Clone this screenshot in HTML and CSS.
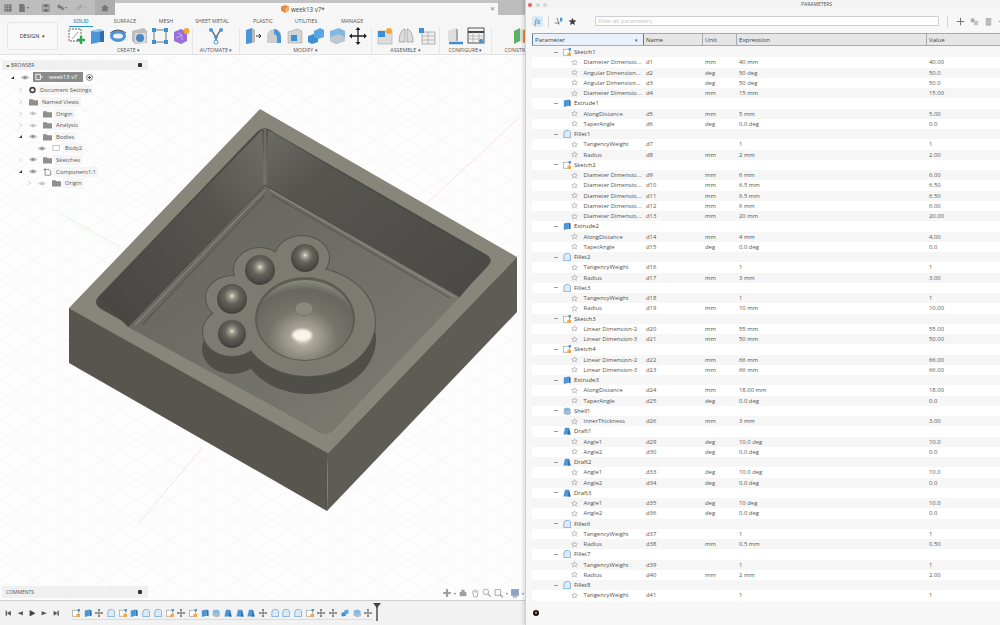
FILE: index.html
```html
<!DOCTYPE html>
<html lang="en">
<head>
    <meta charset="UTF-8">
    <meta name="viewport" content="width=device-width, initial-scale=1.0">
    <title>week13 v7 - Parameters</title>
    <link rel="stylesheet" href="styles.css">
</head>
<body>
    <svg class="defs" width="0" height="0">
        <defs>
            <symbol id="i-sketch" viewBox="0 0 18 18"><rect x="2" y="2" width="12" height="12" fill="#fff" stroke="#666" stroke-dasharray="2 1"/><path d="M5 12 L11 5" stroke="#999"/><path d="M14 9v8M10 13h8" stroke="#2fa84a" stroke-width="2.4"/></symbol>
            <symbol id="i-extrude" viewBox="0 0 18 18"><path d="M3 4l9-2v13l-9 2z" fill="#4a96d8"/><path d="M12 2l4 2v11l-4 0z" fill="#2f6fab"/><path d="M3 4l9-2 4 2-9 1z" fill="#9ccaf0"/></symbol>
            <symbol id="i-revolve" viewBox="0 0 18 18"><ellipse cx="9" cy="9" rx="8" ry="6" fill="#4a96d8"/><ellipse cx="9" cy="9" rx="5" ry="2.6" fill="#eee"/><path d="M1 6 Q9 0 17 6" stroke="#555" fill="none"/></symbol>
            <symbol id="i-hole" viewBox="0 0 18 18"><path d="M2 4l12-3 3 3v12l-12 1-3-3z" fill="#bdbdbd"/><path d="M5 6h11v10H5z" fill="#d9d9d9"/><circle cx="10" cy="11" r="4" fill="#4a88c0"/></symbol>
            <symbol id="i-pattern" viewBox="0 0 18 18"><path d="M3 3h12M3 3v12M15 3v12M3 15h12" stroke="#777"/><rect x="1" y="1" width="4" height="4" fill="#3d8fd4"/><rect x="13" y="1" width="4" height="4" fill="#3d8fd4"/><rect x="1" y="13" width="4" height="4" fill="#3d8fd4"/><rect x="13" y="13" width="4" height="4" fill="#3d8fd4"/></symbol>
            <symbol id="i-form" viewBox="0 0 18 18"><path d="M2 5l7-3 6 3v9l-6 3-7-3z" fill="#9a6fd8"/><path d="M6 6l4 2v5M4 11l6-3" stroke="#c9aef0" fill="none"/><circle cx="14.5" cy="4" r="3" fill="#f2a92e"/></symbol>
            <symbol id="i-auto" viewBox="0 0 18 18"><path d="M5 4l4 6 4-6M9 10v4" stroke="#555" stroke-width="1.3" fill="none"/><circle cx="4" cy="3" r="2" fill="#4a96d8"/><circle cx="14" cy="3" r="2" fill="#4a96d8"/><circle cx="9" cy="10" r="2" fill="#4a96d8"/><circle cx="9" cy="15" r="2" fill="#fff" stroke="#4a96d8"/></symbol>
            <symbol id="i-press" viewBox="0 0 18 18"><path d="M2 3l6-2v15l-6 1z" fill="#4a96d8"/><path d="M8 1l3 2v12l-3 1z" fill="#bbb"/><path d="M12 9h5M15 7l2 2-2 2" stroke="#333" fill="none"/></symbol>
            <symbol id="i-fillet" viewBox="0 0 18 18"><path d="M2 16V8a7 7 0 0 1 7-6h3l4 4v10z" fill="#cfcfcf"/><path d="M9 2a8 8 0 0 1 7 8v6h-4v-5a4 4 0 0 0-3-4z" fill="#4a96d8"/></symbol>
            <symbol id="i-chamfer" viewBox="0 0 18 18"><path d="M2 5l9-3 5 2v12H2z" fill="#d4d4d4" stroke="#999" stroke-width=".5"/><path d="M5 8l6 0v6H5z" fill="#3d8fd4"/></symbol>
            <symbol id="i-combine" viewBox="0 0 18 18"><path d="M1 9l6-2 4 1v7l-6 2-4-2z" fill="#3d8fd4"/><path d="M7 4l6-3 4 2v7l-6 2-4-2z" fill="#5aa5e6"/></symbol>
            <symbol id="i-shell" viewBox="0 0 18 18"><path d="M2 4l9-3 6 3v10l-9 3-6-3z" fill="#7fb7e6"/><path d="M2 10l9-3 6 3v4l-9 3-6-3z" fill="#bfc7cf"/></symbol>
            <symbol id="i-move" viewBox="0 0 18 18"><path d="M9 1v16M1 9h16" stroke="#222" stroke-width="1.3"/><path d="M9 0l2.5 3h-5zM9 18l2.5-3h-5zM0 9l3-2.5v5zM18 9l-3-2.5v5z" fill="#222"/></symbol>
            <symbol id="i-joint" viewBox="0 0 18 18"><rect x="2" y="4" width="14" height="13" fill="#ddd" stroke="#999" stroke-width=".5"/><rect x="2" y="4" width="7" height="6" fill="#3d8fd4"/><circle cx="13" cy="4" r="3" fill="#f2a92e"/></symbol>
            <symbol id="i-contact" viewBox="0 0 18 18"><path d="M2 15C2 7 5 2 8 2v13zM10 15V2c3 0 6 5 6 13z" fill="#dcdcdc" stroke="#888" stroke-width=".6"/></symbol>
            <symbol id="i-table" viewBox="0 0 18 18"><rect x="4" y="5" width="13" height="12" fill="#eee" stroke="#888" stroke-width=".6"/><path d="M4 9h13M4 13h13M10 5v12" stroke="#999" stroke-width=".6"/><rect x="1" y="1" width="5" height="5" fill="#3d8fd4"/></symbol>
            <symbol id="i-config" viewBox="0 0 18 18"><path d="M2 4l8-3v13H2z" fill="#dedede"/><path d="M10 1l2 2v11h-2z" fill="#aaa"/><path d="M3 16h14" stroke="#3d8fd4" stroke-width="2.5"/></symbol>
            <symbol id="i-sheet" viewBox="0 0 18 18"><rect x="1" y="1" width="16" height="15" fill="#f2f2f2" stroke="#555"/><path d="M1 5h16" stroke="#444" stroke-width="2"/><path d="M1 9h16M1 12h16M6 5v11M12 5v11" stroke="#999" stroke-width=".6"/><circle cx="14" cy="14" r="2" fill="#3d8fd4"/></symbol>
            <symbol id="i-plane" viewBox="0 0 18 18"><path d="M1 4l6-3v13l-6 3z" fill="#5cb06a"/><path d="M7 1l3 2v13l-3-2z" fill="#ddd"/><path d="M10 3l7-2v13l-7 2z" fill="#e8893a"/></symbol>
            <symbol id="i-eye" viewBox="0 0 12 8"><path d="M1 4q5-5 10 0q-5 5-10 0z" fill="#bcbcbc"/><circle cx="6" cy="4" r="1.6" fill="#8d8d8d"/></symbol>
            <symbol id="i-folder" viewBox="0 0 10 8"><path d="M0 1h4l1 1h5v6H0z" fill="#8f8f8f"/></symbol>
            <symbol id="i-star" viewBox="0 0 10 10"><path d="M5 1l1.2 2.7 2.9.3-2.200 1.900.7 2.900L5 6.700 2.400 8.800l.7-2.900L.9 4l2.900-.3z" fill="none" stroke="#8a8a8a" stroke-width=".7"/></symbol>
            <symbol id="p-sketch" viewBox="0 0 10 10"><rect x=".5" y="1.5" width="7.5" height="7.5" fill="#fff" stroke="#8c8c8c" stroke-width=".7"/><rect x="5.5" y="6" width="4.500" height="4" fill="#eda94a"/><rect x="7" y="0" width="3" height="3" fill="#4a96d8"/></symbol>
            <symbol id="p-extrude" viewBox="0 0 10 10"><path d="M1 2l6-1.500v8L1 10z" fill="#4a96d8"/><path d="M7 .5l2.500 1.500v7L7 8.500z" fill="#2f6fab"/></symbol>
            <symbol id="p-fillet" viewBox="0 0 10 10"><path d="M1 9.500V4a4 4 0 0 1 4-3.500h2l2.500 2v7z" fill="#dfeaf4" stroke="#4a96d8" stroke-width=".8"/></symbol>
            <symbol id="p-shell" viewBox="0 0 10 10"><path d="M1 2l5-1.500 3.500 2v6L5 10 1 8z" fill="#7fb7e6"/><path d="M1 6l5-1.500 3.500 2v2.500L5 10 1 8z" fill="#aebcc8"/></symbol>
            <symbol id="p-draft" viewBox="0 0 10 10"><path d="M2.500 1h5l2 8.500H.5z" fill="#4a96d8"/><path d="M7.500 1l2 8.500H6z" fill="#2f6fab"/></symbol>
        </defs>
    </svg>

    <div class="app">
        <div class="titlebar">
            <div class="file-tools">
                <svg class="tool" viewBox="0 0 10 10"><path d="M1 1h8v8H1zM1 4h8M1 7h8M4 1v8M7 1v8" fill="none" stroke="#666"/></svg>
                <svg class="tool wide" viewBox="0 0 14 10"><path d="M1 0h5l2 2v8H1z" fill="#777"/><path d="M10 4h4l-2 2z" fill="#666"/></svg>
                <svg class="tool tool-save" viewBox="0 0 10 10"><path d="M1 1h8v8H1z" fill="none" stroke="#666"/><path d="M3 1h4v3H3zM3 6h4v3H3z" fill="#666"/></svg>
                <svg class="tool wide" viewBox="0 0 14 10"><path d="M6 3H3.500M1 3l3-2.500v5zM3 3h3a3 3 0 0 1 2 5" fill="#777" stroke="#777" stroke-width=".8"/><path d="M10 4h4l-2 2z" fill="#777"/></svg>
                <svg class="tool wide faint" viewBox="0 0 14 10"><path d="M8 3H5a3 3 0 0 0-2 5M9 3L6 .5v5z" fill="#999" stroke="#999" stroke-width=".8"/><path d="M10 4h4l-2 2z" fill="#999"/></svg>
                <div class="home"><svg class="tool" viewBox="0 0 10 10"><path d="M5 1L0 5h1.500v4h7V5H10z" fill="#777"/></svg></div>
            </div>
            <div class="doc-tab">
                <svg class="doc-icon" viewBox="0 0 10 10"><path d="M0 2l5-2 5 2v5l-5 3-5-3z" fill="#e9883a"/><path d="M5 4l5-2v5l-5 3z" fill="#f2b06a"/></svg>
                <span>week13 v7*</span>
                <span class="doc-close">&#x2715;</span>
            </div>
            <div class="title-end"></div>
        </div>

        <div class="ribbon">
            <div class="design-btn">DESIGN <b>&#9662;</b></div>
            <div class="tabs">
                <span class="tab tab-solid"><em>SOLID</em></span>
                <span class="tab tab-surface">SURFACE</span>
                <span class="tab tab-mesh">MESH</span>
                <span class="tab tab-sheet">SHEET METAL</span>
                <span class="tab tab-plastic">PLASTIC</span>
                <span class="tab tab-utilities">UTILITIES</span>
                <span class="tab tab-manage">MANAGE</span>
            </div>
            <div class="groups">
                <div class="group group-create">
                    <div class="icons">
                        <svg><use href="#i-sketch"/></svg><svg><use href="#i-extrude"/></svg><svg><use href="#i-revolve"/></svg><svg><use href="#i-hole"/></svg><svg><use href="#i-pattern"/></svg><svg><use href="#i-form"/></svg>
                    </div>
                    <div class="group-label">CREATE <b>&#9662;</b></div>
                </div>
                <div class="group group-automate">
                    <div class="icons"><svg><use href="#i-auto"/></svg></div>
                    <div class="group-label">AUTOMATE <b>&#9662;</b></div>
                </div>
                <div class="group group-modify">
                    <div class="icons">
                        <svg><use href="#i-press"/></svg><svg><use href="#i-fillet"/></svg><svg><use href="#i-chamfer"/></svg><svg><use href="#i-combine"/></svg><svg><use href="#i-shell"/></svg><svg><use href="#i-move"/></svg>
                    </div>
                    <div class="group-label">MODIFY <b>&#9662;</b></div>
                </div>
                <div class="group group-assemble">
                    <div class="icons">
                        <svg><use href="#i-joint"/></svg><svg><use href="#i-contact"/></svg><svg><use href="#i-table"/></svg>
                    </div>
                    <div class="group-label">ASSEMBLE <b>&#9662;</b></div>
                </div>
                <div class="group group-configure">
                    <div class="icons">
                        <svg><use href="#i-config"/></svg><svg><use href="#i-sheet"/></svg>
                    </div>
                    <div class="group-label">CONFIGURE <b>&#9662;</b></div>
                </div>
                <div class="group group-construct">
                    <div class="icons"><svg><use href="#i-plane"/></svg></div>
                    <div class="group-label">CONSTRUCT <b>&#9662;</b></div>
                </div>
            </div>
        </div>

        <div class="canvas">
            <svg class="model" viewBox="0 55 525 545">
                <defs>
                    <pattern id="gridA" width="34" height="20" patternUnits="userSpaceOnUse">
                        <path d="M0 0L34 20M0 20L34 0" stroke="#f1f1f1" stroke-width=".6"/>
                    </pattern>
                    <linearGradient id="wallLeft" x1="0" y1="1" x2="1" y2="0">
                        <stop offset="0" stop-color="#464541"/>
                        <stop offset=".65" stop-color="#55544f"/>
                        <stop offset="1" stop-color="#6f6e67"/>
                    </linearGradient>
                    <linearGradient id="wallRight" x1="1" y1="1" x2="0" y2="0">
                        <stop offset="0" stop-color="#494844"/>
                        <stop offset=".75" stop-color="#565550"/>
                        <stop offset="1" stop-color="#6d6c65"/>
                    </linearGradient>
                    <linearGradient id="floor" x1="0" y1="0" x2="1" y2="1">
                        <stop offset="0" stop-color="#63625c"/>
                        <stop offset=".6" stop-color="#72716a"/>
                        <stop offset="1" stop-color="#838176"/>
                    </linearGradient>
                    <radialGradient id="ball" cx=".5" cy=".4" r=".6">
                        <stop offset="0" stop-color="#ebe8dc"/>
                        <stop offset=".14" stop-color="#a5a194"/>
                        <stop offset=".42" stop-color="#67655d"/>
                        <stop offset=".8" stop-color="#4c4b46"/>
                        <stop offset="1" stop-color="#3f3e3a"/>
                    </radialGradient>
                    <radialGradient id="dome" cx=".48" cy=".72" r=".75">
                        <stop offset="0" stop-color="#f4f1e6"/>
                        <stop offset=".14" stop-color="#aca89b"/>
                        <stop offset=".48" stop-color="#75736a"/>
                        <stop offset=".8" stop-color="#68675f"/>
                        <stop offset="1" stop-color="#94948a"/>
                    </radialGradient>
                    <filter id="soft"><feGaussianBlur stdDeviation="1.2"/></filter>
                </defs>
                <rect x="0" y="55" width="525" height="545" fill="#fdfdfd"/>
                <rect x="0" y="55" width="525" height="545" fill="url(#gridA)"/>
                <path d="M520 117L400 228M203 447L137 525" stroke="#f6dcdc" stroke-width=".8"/>
                <path d="M60 213L120 247" stroke="#dcf0dc" stroke-width=".8"/>

                <polygon points="69,308 328,453 327,511 69,363" fill="#57554e"/>
                <polygon points="328,453 517,257 517,312 327,511" fill="#5e5c55"/>
                <polygon points="260,109 517,257 328,453 69,308" fill="#88857b"/>
                <path d="M69 308L328 453L517 257" stroke="#6f6d64" stroke-width=".6" fill="none"/>

                <path d="M258 131Q265 125 273 132L487 255Q494 260 488 266L334 429Q328 436 320 432L101 309Q92 303 99 296Z" fill="#4b4a45"/>
                <polygon points="262,130 99,298 128,327 265,185" fill="url(#wallLeft)"/>
                <polygon points="268,130 490,260 460,297 265,185" fill="url(#wallRight)"/>
                <path d="M265 129V185" stroke="#7d7b73" stroke-width="3" opacity=".7"/>
                <path d="M265 185L128 327L322 433Q328 436 333 430L460 297Z" fill="url(#floor)"/>
                <path d="M265 190L135 325M270 190L455 297" stroke="#93918a" stroke-width="1" fill="none"/>
                <path d="M265 195L142 325M272 195L450 298" stroke="#55544e" stroke-width="1.2" fill="none" opacity=".8"/>
                <path d="M265 185L128 327M265 185L460 297" stroke="#4e4d47" stroke-width="1" fill="none"/>

                <g fill="#4f4e48">
                    <ellipse cx="308" cy="339" rx="68" ry="55"/>
                    <ellipse cx="232" cy="349" rx="30" ry="25"/>
                </g>
                <g class="paw-edge" fill="#55544e" stroke="#55544e" stroke-width="2">
                    <ellipse cx="308" cy="322" rx="67" ry="54"/>
                    <ellipse cx="232" cy="332" rx="29" ry="24"/>
                    <ellipse cx="302" cy="258" rx="27" ry="22"/>
                    <ellipse cx="260" cy="270" rx="26" ry="22"/>
                    <ellipse cx="232" cy="298" rx="26" ry="22"/>
                </g>
                <g fill="#7d7b71">
                    <ellipse cx="308" cy="322" rx="67" ry="54"/>
                    <ellipse cx="232" cy="332" rx="29" ry="24"/>
                    <ellipse cx="302" cy="258" rx="27" ry="22"/>
                    <ellipse cx="260" cy="270" rx="26" ry="22"/>
                    <ellipse cx="232" cy="298" rx="26" ry="22"/>
                    <polygon points="232,298 262,272 302,260 320,282 290,320 240,340"/>
                </g>
                <ellipse cx="305" cy="319" rx="50" ry="42" fill="#5d5c54"/>
                <ellipse cx="305" cy="320" rx="48" ry="40" fill="url(#dome)"/>
                <ellipse cx="302" cy="335" rx="10" ry="6" fill="#f7f4e9" filter="url(#soft)"/>
                <ellipse cx="304" cy="309" rx="9" ry="7" fill="#8a887e" stroke="#6d6b63" stroke-width=".6"/>
                <circle cx="305" cy="258" r="14" fill="url(#ball)"/>
                <circle cx="260" cy="270" r="15" fill="url(#ball)"/>
                <circle cx="232" cy="299" r="15" fill="url(#ball)"/>
                <circle cx="232" cy="334" r="14" fill="url(#ball)"/>
            </svg>

            <div class="browser">
                <div class="panel-head"><span class="collapse">&#9666;&#9666;</span><span class="panel-title">BROWSER</span><span class="pin"></span></div>
                <div class="tree">
                    <div class="tree-row d0"><i class="arrow open"></i><svg class="eye"><use href="#i-eye"/></svg><span class="root-icon"><svg viewBox="0 0 10 8"><path d="M1 1h5v6H1zM6 4h3" stroke="#fff" fill="none"/></svg></span><span class="label root-label">week13 v7</span><i class="radio"></i></div>
                    <div class="tree-row d1"><i class="arrow"></i><svg class="icon gear" viewBox="0 0 10 10"><circle cx="5" cy="5" r="3" fill="none" stroke="#444" stroke-width="2"/></svg><span class="label label-doc">Document Settings</span></div>
                    <div class="tree-row d1"><i class="arrow"></i><svg class="icon"><use href="#i-folder"/></svg><span class="label">Named Views</span></div>
                    <div class="tree-row d1"><i class="arrow"></i><svg class="eye dim"><use href="#i-eye"/></svg><svg class="icon"><use href="#i-folder"/></svg><span class="label">Origin</span></div>
                    <div class="tree-row d1"><i class="arrow"></i><svg class="eye dim"><use href="#i-eye"/></svg><svg class="icon"><use href="#i-folder"/></svg><span class="label">Analysis</span></div>
                    <div class="tree-row d1"><i class="arrow open"></i><svg class="eye"><use href="#i-eye"/></svg><svg class="icon"><use href="#i-folder"/></svg><span class="label">Bodies</span></div>
                    <div class="tree-row d2"><i class="arrow none"></i><svg class="eye"><use href="#i-eye"/></svg><svg class="icon" viewBox="0 0 10 8"><rect x="1" y="1" width="7" height="6" fill="#fff" stroke="#999" stroke-width=".6"/></svg><span class="label">Body2</span></div>
                    <div class="tree-row d1"><i class="arrow"></i><svg class="eye"><use href="#i-eye"/></svg><svg class="icon"><use href="#i-folder"/></svg><span class="label">Sketches</span></div>
                    <div class="tree-row d1"><i class="arrow open"></i><svg class="eye"><use href="#i-eye"/></svg><svg class="icon" viewBox="0 0 10 10"><path d="M2 2h5l2 2v5H2zM0 2h2M2 0v2" fill="none" stroke="#555" stroke-width=".8"/></svg><span class="label">Component1:1</span></div>
                    <div class="tree-row d2"><i class="arrow"></i><svg class="eye dim"><use href="#i-eye"/></svg><svg class="icon"><use href="#i-folder"/></svg><span class="label">Origin</span></div>
                </div>
            </div>

            <div class="comments"><span class="panel-title">COMMENTS</span><span class="pin"></span></div>

            <div class="navbar">
                <svg viewBox="0 0 18 18"><path d="M9 2v14M2 9h14" stroke="#8a8a8a" stroke-width="4"/></svg><b>&#9662;</b>
                <svg viewBox="0 0 18 18"><path d="M3 7h12v8H3zM6 3h6v4H6z" fill="#8a8a8a"/></svg>
                <svg viewBox="0 0 18 18"><path d="M5 9V5M8 8V3M11 8V3M14 9V5M5 9l2 7h6l1-7" stroke="#8a8a8a" stroke-width="1.5" fill="none"/></svg>
                <svg viewBox="0 0 18 18"><circle cx="7" cy="7" r="5" fill="none" stroke="#8a8a8a" stroke-width="1.5"/><path d="M11 11l5 5" stroke="#8a8a8a" stroke-width="2"/></svg>
                <svg viewBox="0 0 18 18"><path d="M2 3h10v10H2z" fill="none" stroke="#777" stroke-width="1.4"/><path d="M11 12l5 5" stroke="#777" stroke-width="2"/></svg><b>&#9662;</b>
                <svg viewBox="0 0 18 18"><rect x="2" y="2" width="14" height="12" fill="#6d8cb8"/><path d="M5 16h8" stroke="#777" stroke-width="2"/></svg><b>&#9662;</b>
            </div>
        </div>

        <div class="timeline">
            <div class="player">
                <svg viewBox="0 0 10 10"><path d="M1 1h2v8H1zM9 1v8L3 5z" fill="#555"/></svg>
                <svg viewBox="0 0 10 10"><path d="M9 2v6L1 5z" fill="#555"/></svg>
                <svg viewBox="0 0 10 10"><path d="M1 0l9 5-9 5z" fill="#444"/></svg>
                <svg viewBox="0 0 10 10"><path d="M1 2v6l8-3z" fill="#555"/></svg>
                <svg viewBox="0 0 10 10"><path d="M9 1H7v8h2zM1 1v8l6-4z" fill="#555"/></svg>
            </div>
            <div class="features">
                <svg><use href="#p-sketch"/></svg><svg><use href="#p-extrude"/></svg><svg><use href="#i-move"/></svg><svg><use href="#p-fillet"/></svg><svg><use href="#p-sketch"/></svg><svg><use href="#p-extrude"/></svg><svg><use href="#p-fillet"/></svg><svg><use href="#p-fillet"/></svg><svg><use href="#p-sketch"/></svg><svg><use href="#i-move"/></svg><svg><use href="#p-sketch"/></svg><svg><use href="#p-extrude"/></svg><svg><use href="#p-shell"/></svg><svg><use href="#p-draft"/></svg><svg><use href="#p-draft"/></svg><svg><use href="#p-draft"/></svg><svg><use href="#i-move"/></svg><svg><use href="#p-fillet"/></svg><svg><use href="#p-fillet"/></svg><svg><use href="#p-fillet"/></svg><svg><use href="#p-sketch"/></svg><svg><use href="#i-move"/></svg><svg><use href="#i-move"/></svg><svg><use href="#i-combine"/></svg><svg><use href="#p-shell"/></svg><svg><use href="#i-move"/></svg>
                <div class="marker"></div>
            </div>
        </div>
    </div>

    <div class="params">
        <div class="win-title">
            <i class="light red"></i><i class="light"></i><i class="light"></i>
            <span class="win-name">PARAMETERS</span>
        </div>
        <div class="param-tools">
            <span class="fx">fx</span>
            <span class="sep"></span>
            <svg class="ptool" viewBox="0 0 12 12"><path d="M4 1l3 9M1 8h6" stroke="#555" fill="none"/><path d="M8 1v5h3V1z" fill="#4a96d8"/></svg>
            <svg class="ptool" viewBox="0 0 12 12"><path d="M6 1l1.500 3.400 3.700.4-2.800 2.400.9 3.600L6 9 2.700 10.800l.9-3.600L.8 4.800l3.700-.4z" fill="#444"/></svg>
            <input class="filter" type="text" placeholder="Filter all parameters">
            <span class="sep sep-right"></span>
            <svg class="ptool" viewBox="0 0 12 12"><path d="M6 1v10M1 6h10" stroke="#666" stroke-width="1.2"/></svg>
            <svg class="ptool" viewBox="0 0 12 12"><path d="M1 2h5v5H1z" fill="#aaa"/><path d="M5 5h6v6H5z" fill="#c4c4c4"/></svg>
            <svg class="ptool" viewBox="0 0 12 12"><path d="M3 3h6v8H3zM2 2h8" fill="#bbb" stroke="#aaa"/></svg>
            <svg class="ptool" viewBox="0 0 12 12"><path d="M1 6h10M8 3l3 3-3 3" stroke="#888" fill="none"/></svg>
        </div>
        <div class="thead">
            <span class="th th-active">Parameter<b>&#9662;</b></span>
            <span class="th">Name</span>
            <span class="th">Unit</span>
            <span class="th">Expression</span>
            <span class="th th-last">Value</span>
        </div>
        <div class="tbody">
            <div class="row grp"><i class="minus"></i><svg><use href="#p-sketch"/></svg>Sketch1</div>
            <div class="row"><span class="pname"><svg><use href="#i-star"/></svg>Diameter Dimensio...</span><span>d1</span><span>mm</span><span>40 mm</span><span>40.00</span></div>
            <div class="row"><span class="pname"><svg><use href="#i-star"/></svg>Angular Dimension...</span><span>d2</span><span>deg</span><span>50 deg</span><span>50.0</span></div>
            <div class="row"><span class="pname"><svg><use href="#i-star"/></svg>Angular Dimension...</span><span>d3</span><span>deg</span><span>50 deg</span><span>50.0</span></div>
            <div class="row"><span class="pname"><svg><use href="#i-star"/></svg>Diameter Dimensio...</span><span>d4</span><span>mm</span><span>15 mm</span><span>15.00</span></div>
            <div class="row grp"><i class="minus"></i><svg><use href="#p-extrude"/></svg>Extrude1</div>
            <div class="row"><span class="pname"><svg><use href="#i-star"/></svg>AlongDistance</span><span>d5</span><span>mm</span><span>5 mm</span><span>5.00</span></div>
            <div class="row"><span class="pname"><svg><use href="#i-star"/></svg>TaperAngle</span><span>d6</span><span>deg</span><span>0.0 deg</span><span>0.0</span></div>
            <div class="row grp"><i class="minus"></i><svg><use href="#p-fillet"/></svg>Fillet1</div>
            <div class="row"><span class="pname"><svg><use href="#i-star"/></svg>TangencyWeight</span><span>d7</span><span></span><span>1</span><span>1</span></div>
            <div class="row"><span class="pname"><svg><use href="#i-star"/></svg>Radius</span><span>d8</span><span>mm</span><span>2 mm</span><span>2.00</span></div>
            <div class="row grp"><i class="minus"></i><svg><use href="#p-sketch"/></svg>Sketch2</div>
            <div class="row"><span class="pname"><svg><use href="#i-star"/></svg>Diameter Dimensio...</span><span>d9</span><span>mm</span><span>6 mm</span><span>6.00</span></div>
            <div class="row"><span class="pname"><svg><use href="#i-star"/></svg>Diameter Dimensio...</span><span>d10</span><span>mm</span><span>6.5 mm</span><span>6.50</span></div>
            <div class="row"><span class="pname"><svg><use href="#i-star"/></svg>Diameter Dimensio...</span><span>d11</span><span>mm</span><span>6.5 mm</span><span>6.50</span></div>
            <div class="row"><span class="pname"><svg><use href="#i-star"/></svg>Diameter Dimensio...</span><span>d12</span><span>mm</span><span>6 mm</span><span>6.00</span></div>
            <div class="row"><span class="pname"><svg><use href="#i-star"/></svg>Diameter Dimensio...</span><span>d13</span><span>mm</span><span>20 mm</span><span>20.00</span></div>
            <div class="row grp"><i class="minus"></i><svg><use href="#p-extrude"/></svg>Extrude2</div>
            <div class="row"><span class="pname"><svg><use href="#i-star"/></svg>AlongDistance</span><span>d14</span><span>mm</span><span>4 mm</span><span>4.00</span></div>
            <div class="row"><span class="pname"><svg><use href="#i-star"/></svg>TaperAngle</span><span>d15</span><span>deg</span><span>0.0 deg</span><span>0.0</span></div>
            <div class="row grp"><i class="minus"></i><svg><use href="#p-fillet"/></svg>Fillet2</div>
            <div class="row"><span class="pname"><svg><use href="#i-star"/></svg>TangencyWeight</span><span>d16</span><span></span><span>1</span><span>1</span></div>
            <div class="row"><span class="pname"><svg><use href="#i-star"/></svg>Radius</span><span>d17</span><span>mm</span><span>3 mm</span><span>3.00</span></div>
            <div class="row grp"><i class="minus"></i><svg><use href="#p-fillet"/></svg>Fillet3</div>
            <div class="row"><span class="pname"><svg><use href="#i-star"/></svg>TangencyWeight</span><span>d18</span><span></span><span>1</span><span>1</span></div>
            <div class="row"><span class="pname"><svg><use href="#i-star"/></svg>Radius</span><span>d19</span><span>mm</span><span>10 mm</span><span>10.00</span></div>
            <div class="row grp"><i class="minus"></i><svg><use href="#p-sketch"/></svg>Sketch3</div>
            <div class="row"><span class="pname"><svg><use href="#i-star"/></svg>Linear Dimension-2</span><span>d20</span><span>mm</span><span>55 mm</span><span>55.00</span></div>
            <div class="row"><span class="pname"><svg><use href="#i-star"/></svg>Linear Dimension-3</span><span>d21</span><span>mm</span><span>50 mm</span><span>50.00</span></div>
            <div class="row grp"><i class="minus"></i><svg><use href="#p-sketch"/></svg>Sketch4</div>
            <div class="row"><span class="pname"><svg><use href="#i-star"/></svg>Linear Dimension-2</span><span>d22</span><span>mm</span><span>66 mm</span><span>66.00</span></div>
            <div class="row"><span class="pname"><svg><use href="#i-star"/></svg>Linear Dimension-3</span><span>d23</span><span>mm</span><span>66 mm</span><span>66.00</span></div>
            <div class="row grp"><i class="minus"></i><svg><use href="#p-extrude"/></svg>Extrude3</div>
            <div class="row"><span class="pname"><svg><use href="#i-star"/></svg>AlongDistance</span><span>d24</span><span>mm</span><span>18.00 mm</span><span>18.00</span></div>
            <div class="row"><span class="pname"><svg><use href="#i-star"/></svg>TaperAngle</span><span>d25</span><span>deg</span><span>0.0 deg</span><span>0.0</span></div>
            <div class="row grp"><i class="minus"></i><svg><use href="#p-shell"/></svg>Shell1</div>
            <div class="row"><span class="pname"><svg><use href="#i-star"/></svg>InnerThickness</span><span>d26</span><span>mm</span><span>3 mm</span><span>3.00</span></div>
            <div class="row grp"><i class="minus"></i><svg><use href="#p-draft"/></svg>Draft1</div>
            <div class="row"><span class="pname"><svg><use href="#i-star"/></svg>Angle1</span><span>d29</span><span>deg</span><span>10.0 deg</span><span>10.0</span></div>
            <div class="row"><span class="pname"><svg><use href="#i-star"/></svg>Angle2</span><span>d30</span><span>deg</span><span>0.0 deg</span><span>0.0</span></div>
            <div class="row grp"><i class="minus"></i><svg><use href="#p-draft"/></svg>Draft2</div>
            <div class="row"><span class="pname"><svg><use href="#i-star"/></svg>Angle1</span><span>d33</span><span>deg</span><span>10.0 deg</span><span>10.0</span></div>
            <div class="row"><span class="pname"><svg><use href="#i-star"/></svg>Angle2</span><span>d34</span><span>deg</span><span>0.0 deg</span><span>0.0</span></div>
            <div class="row grp"><i class="minus"></i><svg><use href="#p-draft"/></svg>Draft3</div>
            <div class="row"><span class="pname"><svg><use href="#i-star"/></svg>Angle1</span><span>d35</span><span>deg</span><span>10 deg</span><span>10.0</span></div>
            <div class="row"><span class="pname"><svg><use href="#i-star"/></svg>Angle2</span><span>d36</span><span>deg</span><span>0.0 deg</span><span>0.0</span></div>
            <div class="row grp"><i class="minus"></i><svg><use href="#p-fillet"/></svg>Fillet6</div>
            <div class="row"><span class="pname"><svg><use href="#i-star"/></svg>TangencyWeight</span><span>d37</span><span></span><span>1</span><span>1</span></div>
            <div class="row"><span class="pname"><svg><use href="#i-star"/></svg>Radius</span><span>d38</span><span>mm</span><span>0.5 mm</span><span>0.50</span></div>
            <div class="row grp"><i class="minus"></i><svg><use href="#p-fillet"/></svg>Fillet7</div>
            <div class="row"><span class="pname"><svg><use href="#i-star"/></svg>TangencyWeight</span><span>d39</span><span></span><span>1</span><span>1</span></div>
            <div class="row"><span class="pname"><svg><use href="#i-star"/></svg>Radius</span><span>d40</span><span>mm</span><span>2 mm</span><span>2.00</span></div>
            <div class="row grp"><i class="minus"></i><svg><use href="#p-fillet"/></svg>Fillet8</div>
            <div class="row"><span class="pname"><svg><use href="#i-star"/></svg>TangencyWeight</span><span>d41</span><span></span><span>1</span><span>1</span></div>
        </div>
        <div class="param-foot"><span class="info">i</span></div>
    </div>
</body>
</html>
```

FILE: styles.css
```css
* {
    box-sizing: border-box;
}
html, body {
    margin: 0;
    height: 100%;
}
body {
    display: flex;
    width: 1000px;
    height: 625px;
    overflow: hidden;
    font-family: "Open Sans", "Liberation Sans", sans-serif;
    color: #444;
    background: #fff;
}
.defs {
    display: none;
}

/* Left side: the CAD window */
.app {
    width: 525px;
    height: 625px;
    display: flex;
    flex-direction: column;
    overflow: hidden;
}
.titlebar {
    height: 15px;
    flex: none;
    display: flex;
    background: #c4c4c4;
}
.file-tools {
    width: 115px;
    display: flex;
    align-items: center;
    padding-left: 4px;
    gap: 5px;
    background: #bdbdbd;
}
.tool {
    width: 8px;
    height: 8px;
}
.tool.wide {
    width: 14px;
}
.tool.faint {
    opacity: .6;
}
.tool-save {
    margin-left: 6px;
}
.home {
    margin-left: auto;
    width: 20px;
    height: 15px;
    display: flex;
    align-items: center;
    justify-content: center;
    background: #adadad;
}
.doc-tab {
    width: 383px;
    margin-top: 3px;
    display: flex;
    align-items: center;
    padding-left: 166px;
    font-size: 6.2px;
    background: #f7f7f7;
}
.doc-icon {
    width: 8px;
    height: 8px;
    margin-right: 2px;
}
.doc-close {
    margin-left: auto;
    margin-right: 3px;
    font-size: 6px;
    color: #777;
}
.title-end {
    flex: 1;
    background: #bdbdbd;
}
.ribbon {
    position: relative;
    height: 40px;
    flex: none;
    background: #f6f6f6;
    border-bottom: 1px solid #e4e4e4;
    overflow: hidden;
}
.design-btn {
    position: absolute;
    left: 7px;
    top: 7px;
    width: 51px;
    height: 28px;
    display: flex;
    align-items: center;
    justify-content: center;
    gap: 3px;
    font-size: 5.5px;
    color: #333;
    background: #f8f8f8;
    border: 1px solid #e6e6e6;
    border-radius: 2px;
}
.design-btn b, .group-label b {
    font-size: 5px;
    font-weight: normal;
}
.tabs {
    display: flex;
    height: 12px;
    padding-left: 60px;
    font-size: 5.3px;
    color: #555;
}
.tab {
    display: flex;
    justify-content: center;
    padding-top: 2px;
}
.tab-solid { width: 42px; }
.tab-surface { width: 46px; }
.tab-mesh { width: 36px; }
.tab-sheet { width: 56px; }
.tab-plastic { width: 46px; }
.tab-utilities { width: 40px; }
.tab-manage { width: 52px; }
.tab em {
    font-style: normal;
    font-weight: 600;
    color: #2b8fd0;
    height: 10px;
    padding: 0 4px;
    border-bottom: 1px solid #2b8fd0;
}
.groups {
    display: flex;
    padding-left: 65px;
    height: 28px;
}
.group {
    flex: none;
    display: flex;
    flex-direction: column;
    align-items: center;
    justify-content: space-between;
    border-right: 1px solid #e6e6e6;
    padding-bottom: 1px;
}
.group-create { width: 128px; }
.group-automate { width: 47px; }
.group-modify { width: 132px; }
.group-assemble { width: 68px; }
.group-configure { width: 52px; }
.group-construct { width: 60px; border: 0; }
.icons {
    display: flex;
    gap: 3px;
}
.icons svg {
    width: 18px;
    height: 18px;
}
.group-label {
    font-size: 5.3px;
    color: #555;
    white-space: nowrap;
}

/* Canvas and overlays */
.canvas {
    position: relative;
    flex: 1;
    min-height: 0;
}
.model {
    display: block;
    width: 525px;
    height: 545px;
}
.browser {
    position: absolute;
    left: 2px;
    top: 5px;
    width: 146px;
    font-size: 5.8px;
}
.panel-head, .comments {
    display: flex;
    align-items: center;
    height: 10px;
    background: #f0f0f0;
    padding: 0 4px;
}
.collapse {
    font-size: 4px;
    letter-spacing: -1px;
    margin-right: 3px;
    color: #444;
}
.panel-title {
    font-size: 5px;
    color: #555;
}
.pin {
    width: 4px;
    height: 4px;
    margin-left: auto;
    margin-right: 2px;
    background: #333;
    border-radius: 1px;
}
.tree {
    padding-top: 1.5px;
}
.tree-row {
    display: flex;
    align-items: center;
    height: 11.6px;
    color: #555;
}
.tree-row.d0 {
    margin-bottom: 1.5px;
}
.d0 { padding-left: 6px; }
.d1 { padding-left: 14px; }
.d2 { padding-left: 23px; }
.arrow {
    width: 8px;
    height: 8px;
    flex: none;
    display: flex;
    align-items: center;
    justify-content: center;
}
.arrow::before {
    content: "";
    border-left: 3px solid #fff;
    border-top: 2px solid transparent;
    border-bottom: 2px solid transparent;
    filter: drop-shadow(0 0 .5px #555);
}
.arrow.open::before {
    border-left: 3px solid transparent;
    border-top: 0;
    border-bottom: 3px solid #333;
    filter: none;
}
.arrow.none::before {
    display: none;
}
.eye {
    width: 10px;
    height: 7px;
    flex: none;
    margin-left: 4px;
}
.eye.dim {
    opacity: .55;
}
.icon {
    width: 9px;
    height: 8px;
    flex: none;
    margin-left: 5px;
}
.icon.gear {
    margin-left: 4px;
}
.label {
    margin-left: 2px;
    padding: 0 2px;
    height: 10px;
    line-height: 10px;
    background: #f5f5f5;
    white-space: nowrap;
}
.label-doc {
    margin-left: 1px;
}
.root-icon {
    width: 14px;
    height: 10px;
    margin-left: 3px;
    padding: 1px 2px;
    background: #8b8b8b;
}
.root-icon svg {
    display: block;
    width: 9px;
    height: 8px;
}
.root-label {
    margin-left: 0;
    width: 36px;
    color: #fff;
    background: #8b8b8b;
}
.radio {
    width: 7px;
    height: 7px;
    margin-left: 3px;
    border-radius: 50%;
    border: 1px solid #888;
    background: radial-gradient(#444 35%, #eee 40%);
}
.comments {
    position: absolute;
    left: 2px;
    top: 531px;
    width: 146px;
    height: 12px;
}
.navbar {
    position: absolute;
    left: 442px;
    top: 533px;
    display: flex;
    align-items: center;
    gap: 2px;
    opacity: .8;
}
.navbar svg {
    width: 10px;
    height: 10px;
}
.navbar b {
    font-size: 4px;
    font-weight: normal;
    color: #666;
}
.timeline {
    height: 25px;
    flex: none;
    display: flex;
    align-items: center;
    padding-left: 5px;
    background: #f2f2f2;
    border-top: 1px solid #cfcfcf;
}
.player {
    display: flex;
    gap: 5.5px;
    width: 67px;
}
.player svg {
    width: 6.5px;
    height: 6.5px;
}
.features {
    position: relative;
    display: flex;
    gap: 3.7px;
    border-bottom: 1px solid #dcdcdc;
    padding-bottom: 2px;
    margin-top: 2px;
}
.features svg {
    width: 8px;
    height: 8px;
}
.marker {
    position: absolute;
    right: -6px;
    top: -6px;
    width: 2px;
    height: 18px;
    background: #777;
}
.marker::before {
    content: "";
    position: absolute;
    left: -3px;
    top: 0;
    border-left: 4px solid transparent;
    border-right: 4px solid transparent;
    border-top: 5px solid #444;
}

/* Right side: the parameters dialog */
.params {
    width: 475px;
    height: 625px;
    display: flex;
    flex-direction: column;
    background: #f7f7f7;
    border-left: 1px solid #d0d0d0;
    box-shadow: -2px 0 3px rgba(0, 0, 0, .12);
    z-index: 1;
}
.win-title {
    position: relative;
    height: 9px;
    flex: none;
    display: flex;
    align-items: center;
    gap: 3.5px;
    padding-left: 2px;
    background: #f3f3f3;
}
.light {
    width: 4px;
    height: 4px;
    border-radius: 50%;
    background: #d5d5d5;
}
.light.red {
    background: #ec5f57;
}
.win-name {
    position: absolute;
    left: 275px;
    top: 1px;
    font-size: 5px;
    color: #555;
}
.param-tools {
    height: 24px;
    flex: none;
    display: flex;
    align-items: center;
    padding-left: 6px;
    overflow: hidden;
}
.fx {
    width: 11px;
    height: 11px;
    flex: none;
    text-align: center;
    font: italic 8px/11px "Liberation Serif", serif;
    color: #3a6ea5;
    background: #dce9f5;
    border-radius: 2px;
}
.sep {
    width: 1px;
    height: 11px;
    flex: none;
    margin: 0 5px;
    background: #d5d5d5;
}
.sep-right {
    margin: 0 8px;
}
.ptool {
    width: 9px;
    height: 9px;
    margin-right: 5px;
    flex: none;
}
.filter {
    width: 344px;
    height: 10px;
    margin-left: 13px;
    padding: 0 2px;
    font-size: 5.8px;
    font-family: inherit;
    background: #fff;
    border: 1px solid #cfcfcf;
    border-radius: 1px;
    outline: 0;
    flex: none;
}
.filter::placeholder {
    color: #c2c2c2;
}
.thead, .row {
    display: grid;
    grid-template-columns: 112px 59px 34px 190px 1fr;
    margin-left: 6px;
}
.thead {
    height: 13px;
    flex: none;
    font-size: 6.1px;
    background: #e6e6e6;
    border-top: 1px solid #aaa;
    border-bottom: 1px solid #aaa;
}
.th {
    display: flex;
    align-items: center;
    justify-content: space-between;
    padding: 0 2px;
    border-right: 1px solid #aaa;
    color: #444;
}
.th b {
    font-size: 5px;
    font-weight: normal;
    color: #555;
    margin-right: 3px;
}
.th-active {
    background: #e8f1fb;
    border: 1px solid #5f7f9f;
    border-top: 0;
    border-bottom: 0;
}
.th-last {
    border-right: 0;
}
.tbody {
    flex: 1;
    min-height: 0;
    overflow: hidden;
    padding-top: 1px;
    font-size: 5.9px;
    color: #555;
}
.row {
    height: 10.255px;
    line-height: 10.255px;
    white-space: nowrap;
}
.row > span {
    padding-left: 2px;
    overflow: hidden;
}
.row:nth-child(odd) {
    background: #f6f6f6;
}
.row:nth-child(even) {
    background: #fff;
}
.pname {
    display: flex;
    align-items: center;
    padding-left: 39px !important;
}
.pname svg {
    width: 7px;
    height: 7px;
    flex: none;
    margin-right: 5.5px;
}
.grp {
    display: flex;
    align-items: center;
    padding-left: 22px;
    color: #444;
}
.grp svg {
    width: 8px;
    height: 8px;
    margin-right: 3px;
    margin-left: 5px;
}
.minus {
    width: 4px;
    height: 1px;
    background: #999;
}
.param-foot {
    height: 24px;
    flex: none;
    display: flex;
    align-items: center;
    padding-left: 7px;
}
.info {
    width: 6px;
    height: 6px;
    border-radius: 50%;
    background: #111;
    color: #fff;
    font: bold 5px/6px "Liberation Serif", serif;
    text-align: center;
}
```
